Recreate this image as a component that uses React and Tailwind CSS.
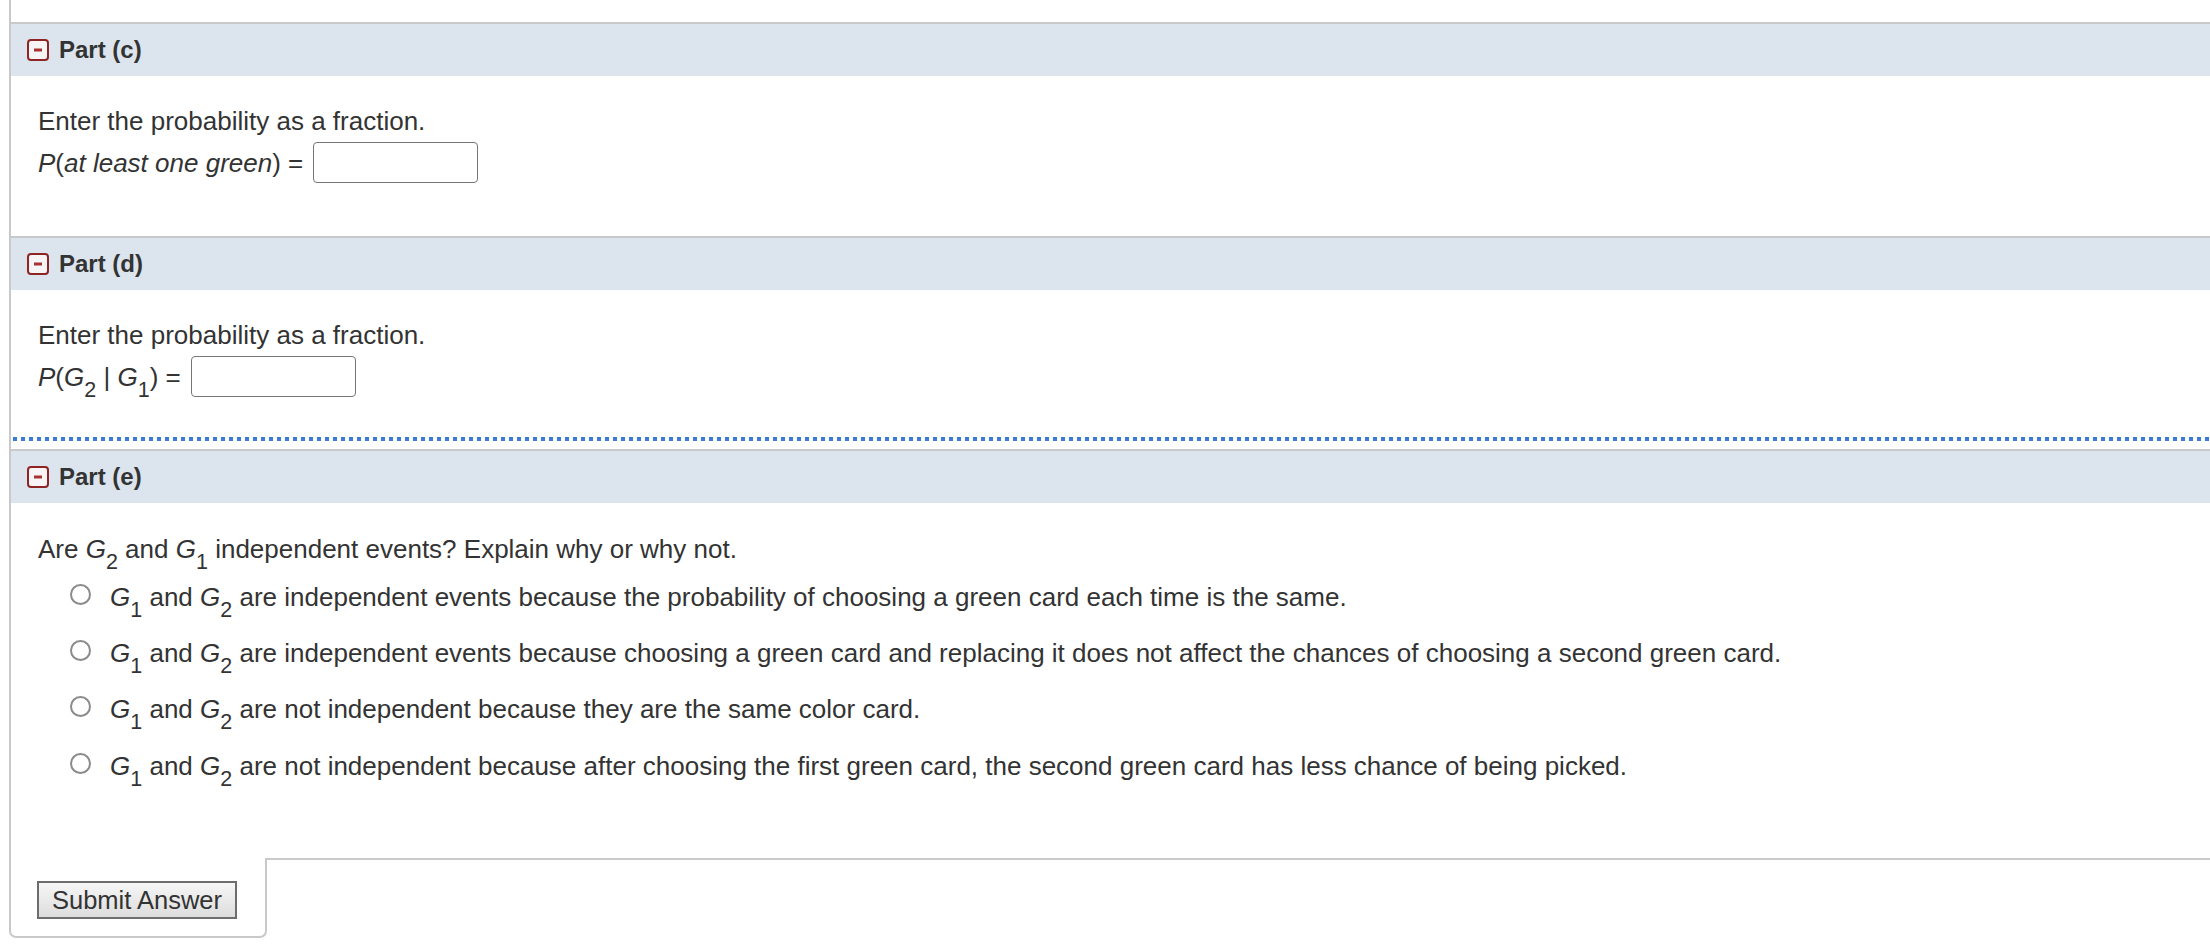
import React from 'react';

const options = [
  'are independent events because the probability of choosing a green card each time is the same.',
  'are independent events because choosing a green card and replacing it does not affect the chances of choosing a second green card.',
  'are not independent because they are the same color card.',
  'are not independent because after choosing the first green card, the second green card has less chance of being picked.',
];

function Sub({ children }) {
  return <span className="relative top-[11px] text-[21.5px] leading-none not-italic">{children}</span>;
}

function G({ n }) {
  return (
    <>
      <i>G</i>
      <Sub>{n}</Sub>
    </>
  );
}

function MinusIcon() {
  return (
    <svg width="22" height="22" viewBox="0 0 22 22" className="shrink-0">
      <rect x="1" y="1" width="20" height="20" rx="3" fill="#f6f4f4" stroke="#8e2424" strokeWidth="2" />
      <rect x="7" y="9.5" width="8" height="3" fill="#a83232" />
    </svg>
  );
}

function PartHeader({ label }) {
  return (
    <div className="border-t-2 border-[#c9c9c9]">
      <div className="h-[52px] bg-[#dce5ee] flex items-center pl-[16px] gap-[10px]">
        <MinusIcon />
        <span className="text-[24px] font-bold text-[#333]">{label}</span>
      </div>
    </div>
  );
}

function Blank() {
  return <span className="ml-[10px] w-[165px] h-[41px] border-[1.5px] border-[#767676] rounded-[4px] bg-white shrink-0" />;
}

export default function App() {
  return (
    <div className="w-[2210px] h-[944px] bg-white text-[#333] text-[26px] font-['Liberation_Sans',Arial,sans-serif] overflow-hidden">
      <div className="ml-[9px] border-l-2 border-[#c9c9c9]">
        <div className="h-[22px]" />

        {/* Part (c) */}
        <PartHeader label="Part (c)" />
        <div className="pl-[27px] pt-[29px] pb-[53px]">
          <div className="leading-[32px]">Enter the probability as a fraction.</div>
          <div className="mt-[5px] flex items-center">
            <span className="leading-[32px]">
              <i>P</i>(<i>at least one green</i>) =
            </span>
            <Blank />
          </div>
        </div>

        {/* Part (d) */}
        <PartHeader label="Part (d)" />
        <div className="pt-[29px]">
          <div className="pl-[27px]">
            <div className="leading-[32px]">Enter the probability as a fraction.</div>
            <div className="mt-[5px] flex items-center">
              <span className="leading-[32px] whitespace-nowrap">
                <i>P</i>(<G n="2" /> | <G n="1" />) =
              </span>
              <Blank />
            </div>
          </div>
          <div className="mt-[40px] ml-[2px] h-[4px] bg-[repeating-linear-gradient(to_right,#3a7bd8_0px,#3a7bd8_4px,transparent_4px,transparent_8px)]" />
          <div className="h-[8px]" />
        </div>

        {/* Part (e) */}
        <PartHeader label="Part (e)" />
        <div className="pl-[27px] pt-[30px] pb-[76px]">
          <div className="leading-[32px]">
            Are <G n="2" /> and <G n="1" /> independent events? Explain why or why not.
          </div>
          <div className="mt-[16px] flex flex-col gap-[24.2px]">
            {options.map((text, i) => (
              <div key={i} className="flex items-start h-[32px]">
                <span className="ml-[32px] mt-[3px] w-[21px] h-[21px] rounded-full border-2 border-[#8a8a8a] bg-white shrink-0" />
                <span className="ml-[19px] leading-[32px] whitespace-nowrap">
                  <G n="1" /> and <G n="2" /> {text}
                </span>
              </div>
            ))}
          </div>
        </div>
      </div>

      <div className="flex ml-[9px]">
        <div className="w-[258px] h-[80px] border-l-2 border-r-2 border-b-2 border-[#c9c9c9] rounded-b-[7px] pl-[26px] pt-[23px]">
          <button className="w-[200px] h-[38px] border-2 border-[#6d6d6d] bg-linear-to-b from-[#f6f6f6] to-[#dddddd] text-[25.5px] text-[#333] leading-none">
            Submit Answer
          </button>
        </div>
        <div className="flex-1 border-t-2 border-[#c9c9c9]" />
      </div>
    </div>
  );
}
